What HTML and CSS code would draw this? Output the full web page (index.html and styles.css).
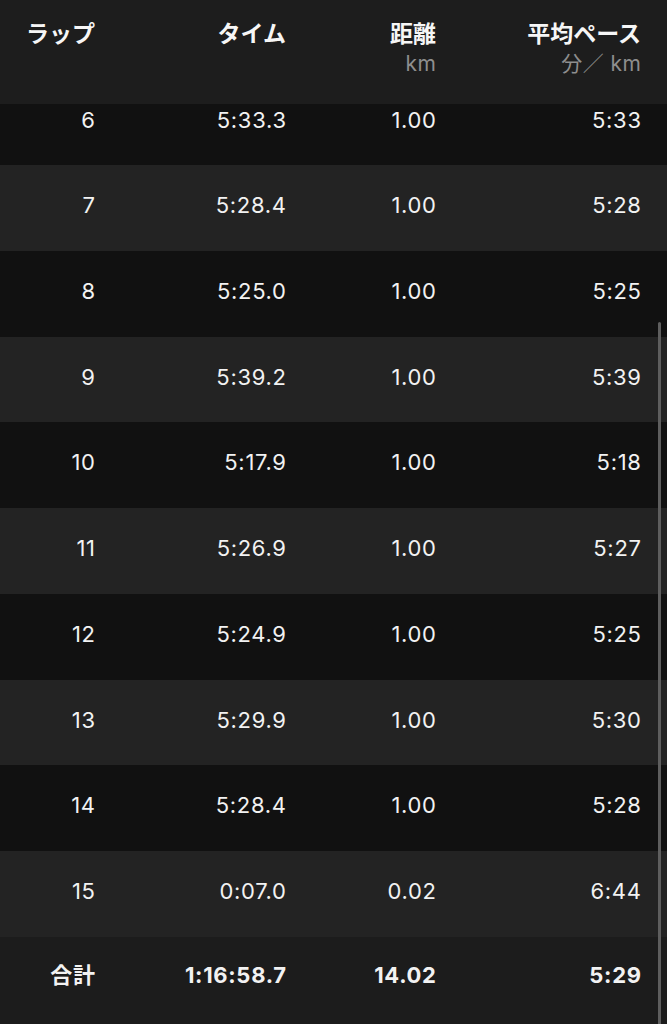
FILE: index.html
```html
<!DOCTYPE html>
<html lang="ja">
<head>
<meta charset="utf-8">
<link rel="stylesheet" href="styles.css">
</head>
<body>
<div class="screen">
  <div class="head">
    <div class="cell"><div class="title">ラップ</div></div>
    <div class="cell"><div class="title">タイム</div></div>
    <div class="cell"><div class="title">距離</div><div class="unit">km</div></div>
    <div class="cell"><div class="title">平均ペース</div><div class="unit">分／ km</div></div>
  </div>
  <div class="list">
    <div class="row dark partial"><span>6</span><span>5:33.3</span><span>1.00</span><span>5:33</span></div>
    <div class="row light"><span>7</span><span>5:28.4</span><span>1.00</span><span>5:28</span></div>
    <div class="row dark"><span>8</span><span>5:25.0</span><span>1.00</span><span>5:25</span></div>
    <div class="row light"><span>9</span><span>5:39.2</span><span>1.00</span><span>5:39</span></div>
    <div class="row dark"><span>10</span><span>5:17.9</span><span>1.00</span><span>5:18</span></div>
    <div class="row light"><span>11</span><span>5:26.9</span><span>1.00</span><span>5:27</span></div>
    <div class="row dark"><span>12</span><span>5:24.9</span><span>1.00</span><span>5:25</span></div>
    <div class="row light"><span>13</span><span>5:29.9</span><span>1.00</span><span>5:30</span></div>
    <div class="row dark"><span>14</span><span>5:28.4</span><span>1.00</span><span>5:28</span></div>
    <div class="row light"><span>15</span><span>0:07.0</span><span>0.02</span><span>6:44</span></div>
    <div class="row total"><span>合計</span><span>1:16:58.7</span><span>14.02</span><span>5:29</span></div>
  </div>
  <div class="scrollbar"></div>
</div>
</body>
</html>
```
FILE: styles.css
```css
* { box-sizing: border-box; }
html, body { margin: 0; padding: 0; background: #111111; }
body {
  font-family: "Inter", "Noto Sans CJK JP", sans-serif;
  color: #f2f2f2;
}
.screen {
  position: relative;
  width: 667px;
  height: 1024px;
  overflow: hidden;
}
.head, .row {
  display: grid;
  grid-template-columns: 95px 191px 150px 205px;
  padding-right: 26px;
  text-align: right;
}
.head {
  height: 104px;
  background: #1d1d1d;
  padding-top: 19px;
}
.title {
  font-size: 23px;
  font-weight: 700;
  line-height: 30px;
  color: #f6f6f6;
}
.unit {
  font-size: 21px;
  line-height: 30px;
  letter-spacing: 0.5px;
  margin-right: -0.5px;
  color: #8e8e8e;
}
.row {
  height: 85.75px;
  padding-top: 28px;
  font-size: 22px;
  line-height: 24px;
  letter-spacing: 0.7px;
}
.row span { margin-right: -0.7px; }
.row.partial {
  height: 61px;
  padding-top: 4px;
}
.dark { background: #111111; }
.light { background: #232323; }
.total {
  background: #1c1c1c;
  height: 87px;
  padding-top: 26px;
  font-weight: 700;
}
.scrollbar {
  position: absolute;
  left: 658px;
  top: 322px;
  width: 3px;
  height: 720px;
  border-radius: 2px;
  background: #5e5e5e;
}
```
